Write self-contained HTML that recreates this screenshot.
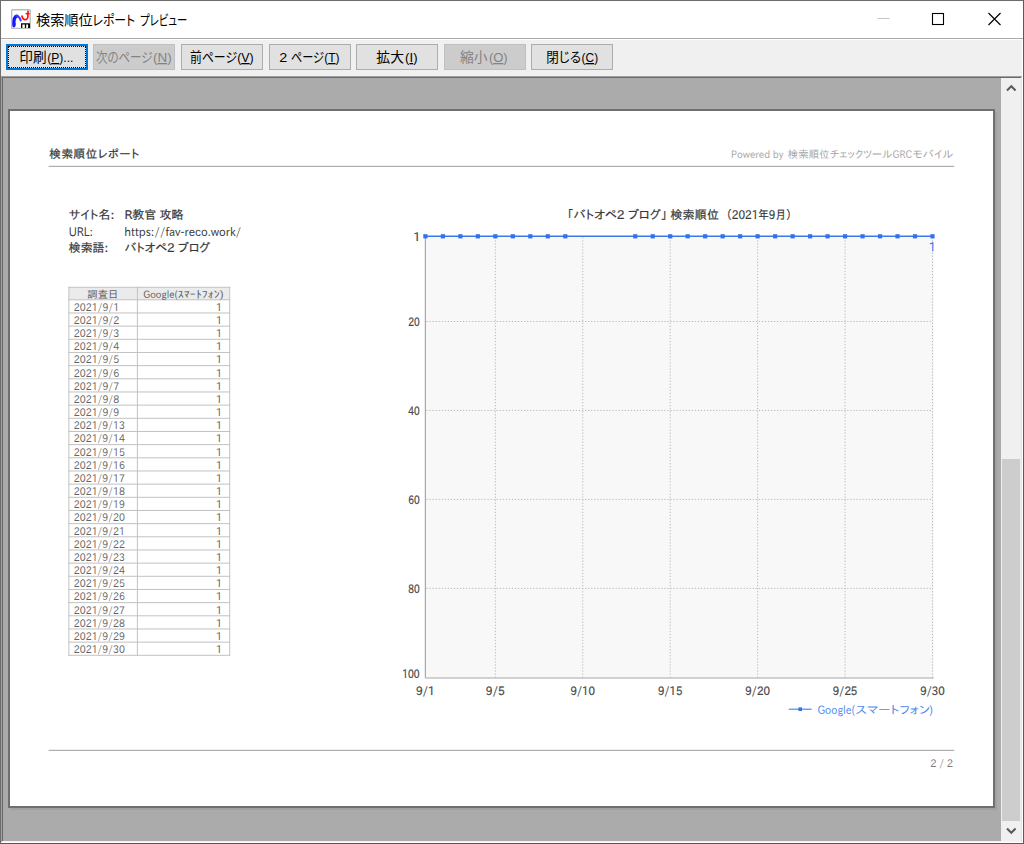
<!DOCTYPE html><html lang="ja"><head><meta charset="utf-8"><title>検索順位レポート プレビュー</title><style>
html,body{margin:0;padding:0;}
body{width:1024px;height:844px;overflow:hidden;background:#fff;position:relative;font-family:"Liberation Sans","Noto Sans CJK JP",sans-serif;}
.abs{position:absolute;}
#win{position:absolute;left:0;top:0;width:1024px;height:844px;background:#fff;}
#bl{left:0;top:0;width:1px;height:844px;background:#6d6d6d;}
#bt{left:0;top:0;width:1024px;height:1px;background:#6d6d6d;}
#br{left:1023px;top:0;width:1px;height:844px;background:#5a5a5a;}
#bb{left:0;top:843px;width:1024px;height:1px;background:#5a5a5a;}
#tbline{left:1px;top:38px;width:1022px;height:1px;background:#a9a9a9;}
#toolbar{left:1px;top:39px;width:1021px;height:36px;background:#f0f0f0;border-top:1px solid #fff;border-right:1px solid #fff;}
.btn{position:absolute;top:44px;height:24px;width:80px;box-sizing:content-box;border:1px solid #adadad;background:#e1e1e1;color:#000;font-size:13.8px;font-weight:350;line-height:24px;text-align:center;white-space:nowrap;font-feature-settings:"palt";}
.btn.dis{background:#cccccc;border-color:#bfbfbf;color:#838383;}
.btn.def{border:2px solid #0078d7;width:78px;height:22px;}
.btn.def:after{content:"";position:absolute;left:0;top:0;right:0;bottom:0;border:1px dotted #000;}
#pane{left:1px;top:76px;width:1022px;height:767px;background:#ababab;}
#pe1{left:1px;top:76px;width:1022px;height:1px;background:#a0a0a0;}
#pe2{left:2px;top:77px;width:1020px;height:1px;background:#696969;}
#pe3{left:1px;top:76px;width:1px;height:766px;background:#a0a0a0;}
#pe4{left:2px;top:77px;width:1px;height:764px;background:#696969;}
#pe5{left:1px;top:842px;width:1022px;height:1px;background:#ffffff;}
#pe6{left:2px;top:841px;width:1020px;height:1px;background:#f4f4f4;}
#pe7{left:1022px;top:76px;width:1px;height:767px;background:#ffffff;}
#pe8{left:1021px;top:77px;width:1px;height:765px;background:#e3e3e3;}
#sb{left:1001px;top:78px;width:20px;height:763px;background:#f0f0f0;}
#thumb{left:1002px;top:459px;width:18px;height:362px;background:#cdcdcd;}
#shadow{left:11px;top:112px;width:986px;height:698px;background:#a1a1a1;}
#page{left:8px;top:109px;width:983px;height:695px;border:2px solid #6f6f6f;background:#fff;}
</style></head><body>
<div id="win">
<svg class="abs" style="left:11px;top:9px" width="20" height="20" viewBox="0 0 20 20">
<rect x="0.7" y="0.8" width="18.5" height="18.6" rx="0.8" fill="#fff" stroke="#bcbcbc" stroke-width="1.4"/>
<path d="M3 16.5 C2.6 11.5 3.4 7.6 5.8 7.1" fill="none" stroke="#1414ff" stroke-width="3.3" stroke-linecap="round"/>
<path d="M1.2 14.2 L3 18.8 L4.9 14.6 Z" fill="#1c1cff"/>
<path d="M5.6 7 C7.6 6.8 8.8 9 9.7 11.4" fill="none" stroke="#3a3aff" stroke-width="2.1" stroke-linecap="round"/>
<path d="M11 7.2 C11.4 10.8 15.6 12.2 16.8 8.6 L17 2.4" fill="none" stroke="#ff1414" stroke-width="1.7" stroke-linecap="round"/>
<path d="M14.6 4.7 L18.6 4.7" stroke="#ff1414" stroke-width="1.5"/>
<path d="M10.7 19 V14.9 H18.2 V19 M14.5 14.9 V19" fill="none" stroke="#000" stroke-width="1.3"/>
<path d="M17.2 15 H18.9 V19 H17.2 Z" fill="#000"/>
</svg>
<svg class="abs" style="left:860px;top:1px" width="163" height="37" viewBox="0 0 163 37">
<path d="M17.5 17.5 H29.5" stroke="#c4c4c4" stroke-width="1"/>
<rect x="72.5" y="12.5" width="11" height="11" fill="none" stroke="#000" stroke-width="1.1"/>
<path d="M128.5 12 L140.5 24 M140.5 12 L128.5 24" stroke="#000" stroke-width="1.15"/>
</svg>
<div id="tbline" class="abs"></div><div id="toolbar" class="abs"></div>
<div class="btn def" style="left:6px"></div>
<div class="btn dis" style="left:93px"></div>
<div class="btn " style="left:181px"></div>
<div class="btn " style="left:269px"></div>
<div class="btn " style="left:356px"></div>
<div class="btn dis" style="left:444px"></div>
<div class="btn " style="left:531px"></div>
<div id="pane" class="abs"></div>
<div id="pe1" class="abs"></div>
<div id="pe2" class="abs"></div>
<div id="pe3" class="abs"></div>
<div id="pe4" class="abs"></div>
<div id="pe5" class="abs"></div>
<div id="pe6" class="abs"></div>
<div id="pe7" class="abs"></div>
<div id="pe8" class="abs"></div>
<div id="sb" class="abs"></div><div id="thumb" class="abs"></div>
<svg class="abs" style="left:1001px;top:78px" width="20" height="20" viewBox="0 0 20 20"><path d="M6 12.5 L10.3 8.2 L14.6 12.5" fill="none" stroke="#5a5a5a" stroke-width="2"/></svg>
<svg class="abs" style="left:1001px;top:821px" width="20" height="20" viewBox="0 0 20 20"><path d="M6 7.5 L10.3 11.8 L14.6 7.5" fill="none" stroke="#5a5a5a" stroke-width="2"/></svg>
<div id="shadow" class="abs"></div><div id="page" class="abs"></div>
<svg class="abs" style="left:0;top:0" width="1024" height="844" viewBox="0 0 1024 844" font-family="IPAPGothic, IPAGothic, 'Noto Sans CJK JP', sans-serif">
<text x="49.2" y="158.4" font-size="11.6" fill="#383838" textLength="90" lengthAdjust="spacing" stroke="#383838" stroke-width="0.2">検索順位レポート</text>
<text x="731" y="158.2" font-size="10.5" fill="#a6a6a6" textLength="52.5" lengthAdjust="spacingAndGlyphs">Powered by</text>
<text x="787.8" y="158.2" font-size="10.5" fill="#a6a6a6" textLength="104.5" lengthAdjust="spacingAndGlyphs">検索順位チェックツール</text>
<text x="892.6" y="158.2" font-size="10.5" fill="#a6a6a6" textLength="19.6" lengthAdjust="spacingAndGlyphs">GRC</text>
<text x="912.6" y="158.2" font-size="10.5" fill="#a6a6a6" textLength="40.8" lengthAdjust="spacingAndGlyphs">モバイル</text>
<rect x="48.6" y="165.8" width="905.6" height="1.1" fill="#a6a6a6"/>
<text x="68.8" y="218.6" font-size="12" fill="#383838" textLength="45.6" lengthAdjust="spacingAndGlyphs" stroke="#383838" stroke-width="0.2">サイト名:</text>
<text x="124.4" y="218.6" font-size="12" fill="#383838" textLength="59.2" lengthAdjust="spacingAndGlyphs" stroke="#383838" stroke-width="0.2">R教官 攻略</text>
<text x="68.8" y="235.5" font-size="12" fill="#383838" textLength="24.2" lengthAdjust="spacingAndGlyphs">URL:</text>
<text x="124.3" y="235.5" font-size="12" fill="#383838" textLength="117" lengthAdjust="spacingAndGlyphs">https://fav-reco.work/</text>
<text x="68.8" y="252.4" font-size="12" fill="#383838" textLength="39.4" lengthAdjust="spacingAndGlyphs" stroke="#383838" stroke-width="0.2">検索語:</text>
<text x="124.5" y="252.4" font-size="12" fill="#383838" textLength="85.6" lengthAdjust="spacingAndGlyphs" stroke="#383838" stroke-width="0.2">バトオペ2 ブログ</text>
<rect x="68.9" y="287.3" width="160.80" height="12.50" fill="#ebebeb"/>
<rect x="68.4" y="286.80" width="161.80" height="1" fill="#c2c2c2"/>
<rect x="68.4" y="299.30" width="161.80" height="1" fill="#c2c2c2"/>
<rect x="68.4" y="312.47" width="161.80" height="1" fill="#c2c2c2"/>
<rect x="68.4" y="325.63" width="161.80" height="1" fill="#c2c2c2"/>
<rect x="68.4" y="338.80" width="161.80" height="1" fill="#c2c2c2"/>
<rect x="68.4" y="351.97" width="161.80" height="1" fill="#c2c2c2"/>
<rect x="68.4" y="365.13" width="161.80" height="1" fill="#c2c2c2"/>
<rect x="68.4" y="378.30" width="161.80" height="1" fill="#c2c2c2"/>
<rect x="68.4" y="391.47" width="161.80" height="1" fill="#c2c2c2"/>
<rect x="68.4" y="404.63" width="161.80" height="1" fill="#c2c2c2"/>
<rect x="68.4" y="417.80" width="161.80" height="1" fill="#c2c2c2"/>
<rect x="68.4" y="430.97" width="161.80" height="1" fill="#c2c2c2"/>
<rect x="68.4" y="444.13" width="161.80" height="1" fill="#c2c2c2"/>
<rect x="68.4" y="457.30" width="161.80" height="1" fill="#c2c2c2"/>
<rect x="68.4" y="470.47" width="161.80" height="1" fill="#c2c2c2"/>
<rect x="68.4" y="483.63" width="161.80" height="1" fill="#c2c2c2"/>
<rect x="68.4" y="496.80" width="161.80" height="1" fill="#c2c2c2"/>
<rect x="68.4" y="509.97" width="161.80" height="1" fill="#c2c2c2"/>
<rect x="68.4" y="523.13" width="161.80" height="1" fill="#c2c2c2"/>
<rect x="68.4" y="536.30" width="161.80" height="1" fill="#c2c2c2"/>
<rect x="68.4" y="549.47" width="161.80" height="1" fill="#c2c2c2"/>
<rect x="68.4" y="562.63" width="161.80" height="1" fill="#c2c2c2"/>
<rect x="68.4" y="575.80" width="161.80" height="1" fill="#c2c2c2"/>
<rect x="68.4" y="588.97" width="161.80" height="1" fill="#c2c2c2"/>
<rect x="68.4" y="602.13" width="161.80" height="1" fill="#c2c2c2"/>
<rect x="68.4" y="615.30" width="161.80" height="1" fill="#c2c2c2"/>
<rect x="68.4" y="628.47" width="161.80" height="1" fill="#c2c2c2"/>
<rect x="68.4" y="641.63" width="161.80" height="1" fill="#c2c2c2"/>
<rect x="68.4" y="654.80" width="161.80" height="1" fill="#c2c2c2"/>
<rect x="68.40" y="286.8" width="1" height="369.00" fill="#c2c2c2"/>
<rect x="136.90" y="286.8" width="1" height="369.00" fill="#c2c2c2"/>
<rect x="229.20" y="286.8" width="1" height="369.00" fill="#c2c2c2"/>
<text x="87.2" y="297.80" font-size="10.3" fill="#626262" textLength="31.2" lengthAdjust="spacing">調査日</text>
<text x="143.2" y="297.80" font-size="10.3" fill="#626262" textLength="34.4" lengthAdjust="spacingAndGlyphs">Google(</text>
<text x="177.7" y="297.80" font-size="10.3" fill="#626262" textLength="46" lengthAdjust="spacingAndGlyphs">ｽﾏｰﾄﾌｫﾝ)</text>
<text x="73.8" y="310.77" font-size="10.5" fill="#626262" textLength="45.4" lengthAdjust="spacingAndGlyphs">2021/9/1</text>
<text x="222.4" y="310.77" font-size="10.5" fill="#626262" text-anchor="end">1</text>
<text x="73.8" y="323.93" font-size="10.5" fill="#626262" textLength="45.4" lengthAdjust="spacingAndGlyphs">2021/9/2</text>
<text x="222.4" y="323.93" font-size="10.5" fill="#626262" text-anchor="end">1</text>
<text x="73.8" y="337.10" font-size="10.5" fill="#626262" textLength="45.4" lengthAdjust="spacingAndGlyphs">2021/9/3</text>
<text x="222.4" y="337.10" font-size="10.5" fill="#626262" text-anchor="end">1</text>
<text x="73.8" y="350.27" font-size="10.5" fill="#626262" textLength="45.4" lengthAdjust="spacingAndGlyphs">2021/9/4</text>
<text x="222.4" y="350.27" font-size="10.5" fill="#626262" text-anchor="end">1</text>
<text x="73.8" y="363.43" font-size="10.5" fill="#626262" textLength="45.4" lengthAdjust="spacingAndGlyphs">2021/9/5</text>
<text x="222.4" y="363.43" font-size="10.5" fill="#626262" text-anchor="end">1</text>
<text x="73.8" y="376.60" font-size="10.5" fill="#626262" textLength="45.4" lengthAdjust="spacingAndGlyphs">2021/9/6</text>
<text x="222.4" y="376.60" font-size="10.5" fill="#626262" text-anchor="end">1</text>
<text x="73.8" y="389.77" font-size="10.5" fill="#626262" textLength="45.4" lengthAdjust="spacingAndGlyphs">2021/9/7</text>
<text x="222.4" y="389.77" font-size="10.5" fill="#626262" text-anchor="end">1</text>
<text x="73.8" y="402.93" font-size="10.5" fill="#626262" textLength="45.4" lengthAdjust="spacingAndGlyphs">2021/9/8</text>
<text x="222.4" y="402.93" font-size="10.5" fill="#626262" text-anchor="end">1</text>
<text x="73.8" y="416.10" font-size="10.5" fill="#626262" textLength="45.4" lengthAdjust="spacingAndGlyphs">2021/9/9</text>
<text x="222.4" y="416.10" font-size="10.5" fill="#626262" text-anchor="end">1</text>
<text x="73.8" y="429.27" font-size="10.5" fill="#626262" textLength="51.1" lengthAdjust="spacingAndGlyphs">2021/9/13</text>
<text x="222.4" y="429.27" font-size="10.5" fill="#626262" text-anchor="end">1</text>
<text x="73.8" y="442.43" font-size="10.5" fill="#626262" textLength="51.1" lengthAdjust="spacingAndGlyphs">2021/9/14</text>
<text x="222.4" y="442.43" font-size="10.5" fill="#626262" text-anchor="end">1</text>
<text x="73.8" y="455.60" font-size="10.5" fill="#626262" textLength="51.1" lengthAdjust="spacingAndGlyphs">2021/9/15</text>
<text x="222.4" y="455.60" font-size="10.5" fill="#626262" text-anchor="end">1</text>
<text x="73.8" y="468.77" font-size="10.5" fill="#626262" textLength="51.1" lengthAdjust="spacingAndGlyphs">2021/9/16</text>
<text x="222.4" y="468.77" font-size="10.5" fill="#626262" text-anchor="end">1</text>
<text x="73.8" y="481.93" font-size="10.5" fill="#626262" textLength="51.1" lengthAdjust="spacingAndGlyphs">2021/9/17</text>
<text x="222.4" y="481.93" font-size="10.5" fill="#626262" text-anchor="end">1</text>
<text x="73.8" y="495.10" font-size="10.5" fill="#626262" textLength="51.1" lengthAdjust="spacingAndGlyphs">2021/9/18</text>
<text x="222.4" y="495.10" font-size="10.5" fill="#626262" text-anchor="end">1</text>
<text x="73.8" y="508.27" font-size="10.5" fill="#626262" textLength="51.1" lengthAdjust="spacingAndGlyphs">2021/9/19</text>
<text x="222.4" y="508.27" font-size="10.5" fill="#626262" text-anchor="end">1</text>
<text x="73.8" y="521.43" font-size="10.5" fill="#626262" textLength="51.1" lengthAdjust="spacingAndGlyphs">2021/9/20</text>
<text x="222.4" y="521.43" font-size="10.5" fill="#626262" text-anchor="end">1</text>
<text x="73.8" y="534.60" font-size="10.5" fill="#626262" textLength="51.1" lengthAdjust="spacingAndGlyphs">2021/9/21</text>
<text x="222.4" y="534.60" font-size="10.5" fill="#626262" text-anchor="end">1</text>
<text x="73.8" y="547.77" font-size="10.5" fill="#626262" textLength="51.1" lengthAdjust="spacingAndGlyphs">2021/9/22</text>
<text x="222.4" y="547.77" font-size="10.5" fill="#626262" text-anchor="end">1</text>
<text x="73.8" y="560.93" font-size="10.5" fill="#626262" textLength="51.1" lengthAdjust="spacingAndGlyphs">2021/9/23</text>
<text x="222.4" y="560.93" font-size="10.5" fill="#626262" text-anchor="end">1</text>
<text x="73.8" y="574.10" font-size="10.5" fill="#626262" textLength="51.1" lengthAdjust="spacingAndGlyphs">2021/9/24</text>
<text x="222.4" y="574.10" font-size="10.5" fill="#626262" text-anchor="end">1</text>
<text x="73.8" y="587.27" font-size="10.5" fill="#626262" textLength="51.1" lengthAdjust="spacingAndGlyphs">2021/9/25</text>
<text x="222.4" y="587.27" font-size="10.5" fill="#626262" text-anchor="end">1</text>
<text x="73.8" y="600.43" font-size="10.5" fill="#626262" textLength="51.1" lengthAdjust="spacingAndGlyphs">2021/9/26</text>
<text x="222.4" y="600.43" font-size="10.5" fill="#626262" text-anchor="end">1</text>
<text x="73.8" y="613.60" font-size="10.5" fill="#626262" textLength="51.1" lengthAdjust="spacingAndGlyphs">2021/9/27</text>
<text x="222.4" y="613.60" font-size="10.5" fill="#626262" text-anchor="end">1</text>
<text x="73.8" y="626.77" font-size="10.5" fill="#626262" textLength="51.1" lengthAdjust="spacingAndGlyphs">2021/9/28</text>
<text x="222.4" y="626.77" font-size="10.5" fill="#626262" text-anchor="end">1</text>
<text x="73.8" y="639.93" font-size="10.5" fill="#626262" textLength="51.1" lengthAdjust="spacingAndGlyphs">2021/9/29</text>
<text x="222.4" y="639.93" font-size="10.5" fill="#626262" text-anchor="end">1</text>
<text x="73.8" y="653.10" font-size="10.5" fill="#626262" textLength="51.1" lengthAdjust="spacingAndGlyphs">2021/9/30</text>
<text x="222.4" y="653.10" font-size="10.5" fill="#626262" text-anchor="end">1</text>
<text x="566.5" y="219.2" font-size="12" fill="#383838" textLength="101.2" lengthAdjust="spacingAndGlyphs" stroke="#383838" stroke-width="0.2">「バトオペ2 ブログ」</text>
<text x="670.4" y="219.2" font-size="12" fill="#383838" textLength="48.6" lengthAdjust="spacing" stroke="#383838" stroke-width="0.2">検索順位</text>
<text x="726" y="219.2" font-size="12" fill="#383838" textLength="65.7" lengthAdjust="spacingAndGlyphs" stroke="#383838" stroke-width="0.2">（2021年9月）</text>
<rect x="425.4" y="236.3" width="508.3" height="441.49999999999994" fill="#f8f8f8"/>
<path d="M426.4 321.50 H932.5" stroke="#b8b8b8" stroke-width="1" stroke-dasharray="1.25 1.8"/>
<path d="M426.4 410.45 H932.5" stroke="#b8b8b8" stroke-width="1" stroke-dasharray="1.25 1.8"/>
<path d="M426.4 499.40 H932.5" stroke="#b8b8b8" stroke-width="1" stroke-dasharray="1.25 1.8"/>
<path d="M426.4 588.35 H932.5" stroke="#b8b8b8" stroke-width="1" stroke-dasharray="1.25 1.8"/>
<path d="M495.34 237.3 V677.8" stroke="#b8b8b8" stroke-width="1" stroke-dasharray="1.25 1.8"/>
<path d="M582.78 237.3 V677.8" stroke="#b8b8b8" stroke-width="1" stroke-dasharray="1.25 1.8"/>
<path d="M670.21 237.3 V677.8" stroke="#b8b8b8" stroke-width="1" stroke-dasharray="1.25 1.8"/>
<path d="M757.64 237.3 V677.8" stroke="#b8b8b8" stroke-width="1" stroke-dasharray="1.25 1.8"/>
<path d="M845.07 237.3 V677.8" stroke="#b8b8b8" stroke-width="1" stroke-dasharray="1.25 1.8"/>
<path d="M932.50 237.3 V677.8" stroke="#b8b8b8" stroke-width="1" stroke-dasharray="1.25 1.8"/>
<path d="M425.4 236.3 V677.8" stroke="#a8a8a8" stroke-width="1.2"/>
<path d="M424.9 677.9 H933.7" stroke="#c2c2c2" stroke-width="1.5"/>
<text x="420.6" y="241.40" font-size="11.6" fill="#444" text-anchor="end" stroke="#444" stroke-width="0.25">1</text>
<text x="408.2" y="325.90" font-size="11.6" fill="#444" textLength="11.4" lengthAdjust="spacingAndGlyphs" stroke="#444" stroke-width="0.25">20</text>
<text x="408.2" y="414.85" font-size="11.6" fill="#444" textLength="11.4" lengthAdjust="spacingAndGlyphs" stroke="#444" stroke-width="0.25">40</text>
<text x="408.2" y="503.80" font-size="11.6" fill="#444" textLength="11.4" lengthAdjust="spacingAndGlyphs" stroke="#444" stroke-width="0.25">60</text>
<text x="408.2" y="592.75" font-size="11.6" fill="#444" textLength="11.4" lengthAdjust="spacingAndGlyphs" stroke="#444" stroke-width="0.25">80</text>
<text x="402.2" y="678.40" font-size="11.6" fill="#444" textLength="17.4" lengthAdjust="spacingAndGlyphs" stroke="#444" stroke-width="0.25">100</text>
<text x="415.90" y="694.5" font-size="11.6" fill="#444" textLength="19.0" lengthAdjust="spacingAndGlyphs" stroke="#444" stroke-width="0.25">9/1</text>
<text x="485.84" y="694.5" font-size="11.6" fill="#444" textLength="19.0" lengthAdjust="spacingAndGlyphs" stroke="#444" stroke-width="0.25">9/5</text>
<text x="570.48" y="694.5" font-size="11.6" fill="#444" textLength="24.6" lengthAdjust="spacingAndGlyphs" stroke="#444" stroke-width="0.25">9/10</text>
<text x="657.91" y="694.5" font-size="11.6" fill="#444" textLength="24.6" lengthAdjust="spacingAndGlyphs" stroke="#444" stroke-width="0.25">9/15</text>
<text x="745.34" y="694.5" font-size="11.6" fill="#444" textLength="24.6" lengthAdjust="spacingAndGlyphs" stroke="#444" stroke-width="0.25">9/20</text>
<text x="832.77" y="694.5" font-size="11.6" fill="#444" textLength="24.6" lengthAdjust="spacingAndGlyphs" stroke="#444" stroke-width="0.25">9/25</text>
<text x="920.20" y="694.5" font-size="11.6" fill="#444" textLength="24.6" lengthAdjust="spacingAndGlyphs" stroke="#444" stroke-width="0.25">9/30</text>
<clipPath id="cp"><rect x="425" y="230" width="508.4" height="450"/></clipPath>
<text x="932.6" y="250.9" font-size="11.6" fill="#3c78e6" stroke="#3c78e6" stroke-width="0.5" text-anchor="middle" clip-path="url(#cp)">1</text>
<path d="M425.4 236.3 H932.5" stroke="#3c78e6" stroke-width="1.6"/>
<rect x="423.30" y="234.20" width="4.2" height="4.2" fill="#3372ec"/>
<rect x="440.79" y="234.20" width="4.2" height="4.2" fill="#3372ec"/>
<rect x="458.27" y="234.20" width="4.2" height="4.2" fill="#3372ec"/>
<rect x="475.76" y="234.20" width="4.2" height="4.2" fill="#3372ec"/>
<rect x="493.24" y="234.20" width="4.2" height="4.2" fill="#3372ec"/>
<rect x="510.73" y="234.20" width="4.2" height="4.2" fill="#3372ec"/>
<rect x="528.22" y="234.20" width="4.2" height="4.2" fill="#3372ec"/>
<rect x="545.70" y="234.20" width="4.2" height="4.2" fill="#3372ec"/>
<rect x="563.19" y="234.20" width="4.2" height="4.2" fill="#3372ec"/>
<rect x="633.13" y="234.20" width="4.2" height="4.2" fill="#3372ec"/>
<rect x="650.62" y="234.20" width="4.2" height="4.2" fill="#3372ec"/>
<rect x="668.11" y="234.20" width="4.2" height="4.2" fill="#3372ec"/>
<rect x="685.59" y="234.20" width="4.2" height="4.2" fill="#3372ec"/>
<rect x="703.08" y="234.20" width="4.2" height="4.2" fill="#3372ec"/>
<rect x="720.57" y="234.20" width="4.2" height="4.2" fill="#3372ec"/>
<rect x="738.05" y="234.20" width="4.2" height="4.2" fill="#3372ec"/>
<rect x="755.54" y="234.20" width="4.2" height="4.2" fill="#3372ec"/>
<rect x="773.02" y="234.20" width="4.2" height="4.2" fill="#3372ec"/>
<rect x="790.51" y="234.20" width="4.2" height="4.2" fill="#3372ec"/>
<rect x="808.00" y="234.20" width="4.2" height="4.2" fill="#3372ec"/>
<rect x="825.48" y="234.20" width="4.2" height="4.2" fill="#3372ec"/>
<rect x="842.97" y="234.20" width="4.2" height="4.2" fill="#3372ec"/>
<rect x="860.46" y="234.20" width="4.2" height="4.2" fill="#3372ec"/>
<rect x="877.94" y="234.20" width="4.2" height="4.2" fill="#3372ec"/>
<rect x="895.43" y="234.20" width="4.2" height="4.2" fill="#3372ec"/>
<rect x="912.91" y="234.20" width="4.2" height="4.2" fill="#3372ec"/>
<rect x="930.40" y="234.20" width="4.2" height="4.2" fill="#3372ec"/>
<path d="M788.8 709.2 H811.6" stroke="#4d88ee" stroke-width="1.2"/><rect x="798.4" y="707.4" width="3.6" height="3.6" fill="#3372ec"/>
<text x="817.4" y="714.2" font-size="11.6" fill="#4d88ee" textLength="37.6" lengthAdjust="spacingAndGlyphs">Google(</text>
<text x="855.2" y="714.2" font-size="11.6" fill="#4d88ee" textLength="74.8" lengthAdjust="spacingAndGlyphs">スマートフォン</text>
<text x="929.2" y="714.2" font-size="11.6" fill="#4d88ee" textLength="3.8" lengthAdjust="spacingAndGlyphs">)</text>
<rect x="48.6" y="749.8" width="905.6" height="1.1" fill="#a6a6a6"/>
<text x="930.3" y="766.6" font-size="10.5" fill="#7a7a7a" textLength="22.8" lengthAdjust="spacingAndGlyphs">2 / 2</text>
</svg>
<svg class="abs" style="left:0;top:0;font-feature-settings:'palt'" width="1024" height="80" viewBox="0 0 1024 80" font-family="'Liberation Sans', 'Noto Sans CJK JP', sans-serif">
<text x="36" y="25.2" font-size="14" fill="#000" font-weight="400" textLength="56.6" lengthAdjust="spacingAndGlyphs">検索順位</text>
<text x="92.6" y="25.2" font-size="14" fill="#000" font-weight="400" textLength="42.6" lengthAdjust="spacingAndGlyphs">レポート</text>
<text x="140" y="25.2" font-size="14" fill="#000" font-weight="400" textLength="47.3" lengthAdjust="spacingAndGlyphs">プレビュー</text>
<text x="19.3" y="62.0" font-size="13.5" fill="#000" font-weight="400" textLength="27.2" lengthAdjust="spacingAndGlyphs">印刷</text>
<text x="47.2" y="62.0" font-size="13" fill="#000" font-weight="400" textLength="26.2" lengthAdjust="spacingAndGlyphs">(<tspan text-decoration="underline">P</tspan>)...</text>
<text x="95.9" y="62.0" font-size="13.5" fill="#838383" font-weight="400" textLength="56.6" lengthAdjust="spacingAndGlyphs">次のページ</text>
<text x="153" y="62.0" font-size="13" fill="#838383" font-weight="400" textLength="18.8" lengthAdjust="spacingAndGlyphs">(<tspan text-decoration="underline">N</tspan>)</text>
<text x="190" y="62.0" font-size="13.5" fill="#000" font-weight="400" textLength="47" lengthAdjust="spacingAndGlyphs">前ページ</text>
<text x="237.2" y="62.0" font-size="13" fill="#000" font-weight="400" textLength="16.5" lengthAdjust="spacingAndGlyphs">(<tspan text-decoration="underline">V</tspan>)</text>
<text x="279.2" y="62.0" font-size="13" fill="#000" font-weight="400" textLength="8" lengthAdjust="spacingAndGlyphs">2</text>
<text x="290.8" y="62.0" font-size="13.5" fill="#000" font-weight="400" textLength="33.2" lengthAdjust="spacingAndGlyphs">ページ</text>
<text x="324.2" y="62.0" font-size="13" fill="#000" font-weight="400" textLength="15.3" lengthAdjust="spacingAndGlyphs">(<tspan text-decoration="underline">T</tspan>)</text>
<text x="376.3" y="62.0" font-size="13.5" fill="#000" font-weight="400" textLength="27.7" lengthAdjust="spacingAndGlyphs">拡大</text>
<text x="405.1" y="62.0" font-size="13" fill="#000" font-weight="400" textLength="12.4" lengthAdjust="spacingAndGlyphs">(<tspan text-decoration="underline">I</tspan>)</text>
<text x="460" y="62.0" font-size="13.5" fill="#838383" font-weight="400" textLength="27.5" lengthAdjust="spacingAndGlyphs">縮小</text>
<text x="488.9" y="62.0" font-size="13" fill="#838383" font-weight="400" textLength="18.8" lengthAdjust="spacingAndGlyphs">(<tspan text-decoration="underline">O</tspan>)</text>
<text x="546.3" y="62.0" font-size="13.5" fill="#000" font-weight="400" textLength="34.7" lengthAdjust="spacingAndGlyphs">閉じる</text>
<text x="581.6" y="62.0" font-size="13" fill="#000" font-weight="400" textLength="16.5" lengthAdjust="spacingAndGlyphs">(<tspan text-decoration="underline">C</tspan>)</text>
</svg>
<div id="bl" class="abs"></div><div id="bt" class="abs"></div><div id="br" class="abs"></div><div id="bb" class="abs"></div>
</div></body></html>
